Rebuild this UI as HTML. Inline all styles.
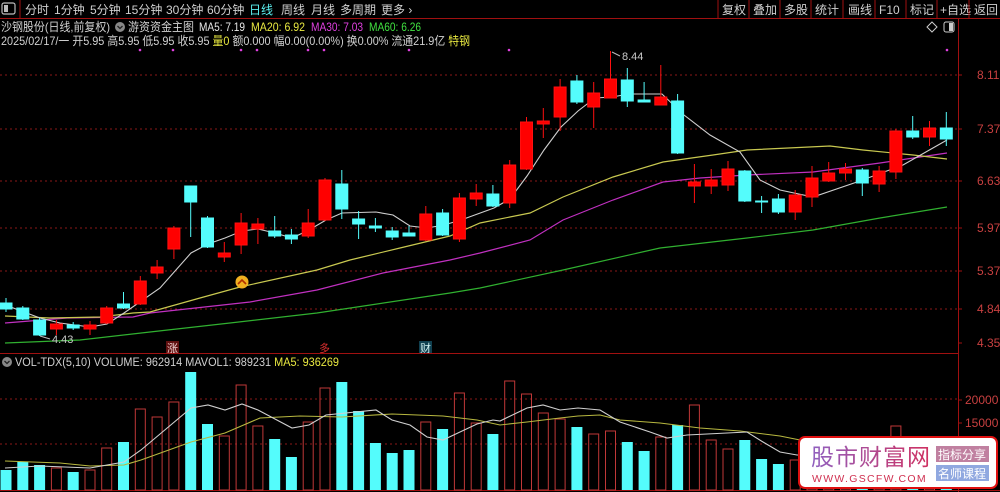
<!DOCTYPE html>
<html><head><meta charset="utf-8"><style>
html,body{margin:0;padding:0;background:#000;width:1000px;height:492px;overflow:hidden}
svg{display:block}
text{font-family:"Liberation Sans","Noto Sans CJK SC",sans-serif}
</style></head><body>
<svg width="1000" height="492" viewBox="0 0 1000 492" xmlns="http://www.w3.org/2000/svg">
<rect width="1000" height="492" fill="#000"/>
<rect x="2" y="3" width="13" height="11" fill="none" stroke="#bbb" stroke-width="1.2" rx="2"/>
<rect x="4" y="5" width="4" height="7" fill="#bbb"/>
<line x1="20" y1="0" x2="20" y2="18" stroke="#a01010"/>
<g font-size="12" fill="#d0d0d0">
<text x="25" y="14">分时</text><text x="54" y="14">1分钟</text><text x="90" y="14">5分钟</text><text x="125" y="14">15分钟</text><text x="166" y="14">30分钟</text><text x="207" y="14">60分钟</text>
<text x="249" y="14" fill="#5cf0f0">日线</text><text x="281" y="14">周线</text><text x="311" y="14">月线</text><text x="340" y="14">多周期</text><text x="381" y="14">更多 ›</text>
<text x="722" y="14">复权</text><text x="753" y="14">叠加</text><text x="784" y="14">多股</text><text x="815" y="14">统计</text><text x="848" y="14">画线</text><text x="879" y="14">F10</text><text x="910" y="14">标记</text><text x="940" y="14">+自选</text><text x="974" y="14">返回</text>
</g>
<g stroke="#a01010"><line x1="718" y1="0" x2="718" y2="18"/><line x1="749" y1="0" x2="749" y2="18"/><line x1="780" y1="0" x2="780" y2="18"/><line x1="811" y1="0" x2="811" y2="18"/><line x1="843" y1="0" x2="843" y2="18"/><line x1="875" y1="0" x2="875" y2="18"/><line x1="906" y1="0" x2="906" y2="18"/><line x1="937" y1="0" x2="937" y2="18"/><line x1="969" y1="0" x2="969" y2="18"/></g>
<line x1="0" y1="18.5" x2="1000" y2="18.5" stroke="#a01010"/>
<g font-size="12">
<text x="1" y="31" fill="#d0d0d0" textLength="109" lengthAdjust="spacingAndGlyphs">沙钢股份(日线,前复权)</text>
<circle cx="120" cy="27" r="5" fill="#888"/><path d="M117.5 26 L120 28.5 L122.5 26" stroke="#222" stroke-width="1.3" fill="none"/>
<text x="128" y="31" fill="#d0d0d0" textLength="66" lengthAdjust="spacingAndGlyphs">游资资金主图</text>
<text x="199" y="31" fill="#e8e8e8" textLength="46" lengthAdjust="spacingAndGlyphs">MA5: 7.19</text>
<text x="251" y="31" fill="#e8e840" textLength="54" lengthAdjust="spacingAndGlyphs">MA20: 6.92</text>
<text x="311" y="31" fill="#e040e0" textLength="52" lengthAdjust="spacingAndGlyphs">MA30: 7.03</text>
<text x="369" y="31" fill="#40e040" textLength="52" lengthAdjust="spacingAndGlyphs">MA60: 6.26</text>
<text x="1" y="45" fill="#d0d0d0" textLength="469" lengthAdjust="spacingAndGlyphs">2025/02/17/一 开5.95 高5.95 低5.95 收5.95 <tspan fill="#e8e840">量0</tspan> 额0.000 幅0.00(0.00%) 换0.00% 流通21.9亿 <tspan fill="#e8e840">特钢</tspan></text>
</g>
<path d="M932 22 L937 27 L932 32 L927 27 Z" fill="none" stroke="#ccc"/>
<rect x="944" y="22" width="10" height="10" rx="2" fill="none" stroke="#ccc"/><rect x="949" y="23" width="4" height="8" fill="#ccc"/>
<line x1="958.5" y1="19" x2="958.5" y2="492" stroke="#a01010"/>
<g stroke="#8a1818" stroke-dasharray="2,3">
<line x1="0" y1="75" x2="958" y2="75"/><line x1="0" y1="129" x2="958" y2="129"/><line x1="0" y1="181" x2="958" y2="181"/><line x1="0" y1="228" x2="958" y2="228"/><line x1="0" y1="271" x2="958" y2="271"/><line x1="0" y1="309" x2="958" y2="309"/>
<line x1="0" y1="399" x2="958" y2="399"/><line x1="0" y1="444" x2="958" y2="444"/>
</g>
<g stroke="#a01010"><line x1="958" y1="75" x2="962" y2="75"/><line x1="958" y1="129" x2="962" y2="129"/><line x1="958" y1="181" x2="962" y2="181"/><line x1="958" y1="228" x2="962" y2="228"/><line x1="958" y1="271" x2="962" y2="271"/><line x1="958" y1="309" x2="962" y2="309"/><line x1="958" y1="343" x2="962" y2="343"/><line x1="958" y1="400" x2="962" y2="400"/><line x1="958" y1="423" x2="962" y2="423"/></g>
<g font-size="12" fill="#c84040">
<text x="977" y="79">8.11</text><text x="977" y="133">7.37</text><text x="977" y="185">6.63</text><text x="977" y="232">5.97</text><text x="977" y="275">5.37</text><text x="977" y="313">4.84</text><text x="977" y="347">4.35</text>
<text x="965" y="404">20000</text><text x="965" y="427">15000</text>
</g>
<g fill="#e040e0"><circle cx="140" cy="50" r="1.3"/><circle cx="173" cy="50" r="1.3"/><circle cx="241" cy="50" r="1.3"/><circle cx="257" cy="50" r="1.3"/><circle cx="308" cy="50" r="1.3"/><circle cx="324" cy="50" r="1.3"/><circle cx="409" cy="50" r="1.3"/><circle cx="509" cy="50" r="1.3"/><circle cx="947" cy="50" r="1.3"/></g>
<!-- MA lines -->
<polyline fill="none" stroke="#30b030" stroke-width="1.2" points="5,343 80,340 150,332 230,323 317,313 450,293 480,288 563,270 660,248 747,238 813,230 880,218 947,207"/>
<polyline fill="none" stroke="#c030c0" stroke-width="1.2" points="5,323 67,318 133,317 150,313 250,302 317,290 383,273 450,260 480,253 530,240 563,220 613,200 663,182 700,178 747,175 813,172 880,163 947,153"/>
<polyline fill="none" stroke="#c8c850" stroke-width="1.2" points="5,316 50,318 100,317 133,313 150,312 200,298 240,287 317,270 350,260 400,248 450,236 480,223 530,213 563,197 613,177 663,162 713,155 747,150 830,146 863,150 913,155 947,159"/>
<polyline fill="none" stroke="#cfcfcf" stroke-width="1.1" points="0,303 40,318 60,323 90,327 107,324 124,313 160,288 191,253 208,244 225,238 242,231 258,229 275,233 292,238 309,230 326,220 342,213 376,212 393,215 410,226 427,228 444,225 461,220 494,208 510,199 527,176 544,150 561,127 578,111 595,98 612,97 629,94 662,94 684,115 710,135 740,152 760,180 780,190 813,197 857,182 903,165 947,140"/>
<g stroke-width="1">
<g stroke="#54fcfc" fill="#54fcfc">
<line x1="6" y1="298" x2="6" y2="312"/><rect x="0" y="303" width="12" height="6"/>
<line x1="22.8" y1="306" x2="22.8" y2="320"/><rect x="16.8" y="308" width="12" height="11"/>
<line x1="39.6" y1="318" x2="39.6" y2="336"/><rect x="33.6" y="320" width="12" height="15"/>
<line x1="73.2" y1="322" x2="73.2" y2="330"/><rect x="67.2" y="325" width="12" height="3"/>
<line x1="123.5" y1="292" x2="123.5" y2="309"/><rect x="117.5" y="304" width="12" height="4"/>
<line x1="190.7" y1="186" x2="190.7" y2="237"/><rect x="184.7" y="186" width="12" height="16"/>
<line x1="207.5" y1="216" x2="207.5" y2="248"/><rect x="201.5" y="218" width="12" height="29"/>
<line x1="274.7" y1="216" x2="274.7" y2="238"/><rect x="268.7" y="231" width="12" height="5"/>
<line x1="291.4" y1="229" x2="291.4" y2="244"/><rect x="285.4" y="235" width="12" height="4"/>
<line x1="341.8" y1="170" x2="341.8" y2="219"/><rect x="335.8" y="184" width="12" height="25"/>
<line x1="358.6" y1="211" x2="358.6" y2="239"/><rect x="352.6" y="219" width="12" height="5"/>
<line x1="375.4" y1="218" x2="375.4" y2="232"/><rect x="369.4" y="226" width="12" height="2"/>
<line x1="392.2" y1="227" x2="392.2" y2="240"/><rect x="386.2" y="231" width="12" height="6"/>
<line x1="409" y1="226" x2="409" y2="236"/><rect x="403" y="233" width="12" height="3"/>
<line x1="442.6" y1="209" x2="442.6" y2="236"/><rect x="436.6" y="213" width="12" height="22"/>
<line x1="492.9" y1="185" x2="492.9" y2="207"/><rect x="486.9" y="194" width="12" height="12"/>
<line x1="576.9" y1="75" x2="576.9" y2="104"/><rect x="570.9" y="81" width="12" height="21"/>
<line x1="627.3" y1="68" x2="627.3" y2="107"/><rect x="621.3" y="80" width="12" height="21"/>
<line x1="644.1" y1="82" x2="644.1" y2="102"/><rect x="638.1" y="100" width="12" height="2"/>
<line x1="677.6" y1="94" x2="677.6" y2="154"/><rect x="671.6" y="101" width="12" height="52"/>
<line x1="744.8" y1="170" x2="744.8" y2="202"/><rect x="738.8" y="171" width="12" height="30"/>
<line x1="761.6" y1="196" x2="761.6" y2="213"/><rect x="755.6" y="201" width="12" height="1"/>
<line x1="778.4" y1="194" x2="778.4" y2="214"/><rect x="772.4" y="199" width="12" height="13"/>
<line x1="862.3" y1="168" x2="862.3" y2="196"/><rect x="856.3" y="170" width="12" height="13"/>
<line x1="912.7" y1="116" x2="912.7" y2="139"/><rect x="906.7" y="131" width="12" height="6"/>
<line x1="946.3" y1="112" x2="946.3" y2="146"/><rect x="940.3" y="128" width="12" height="11"/>
</g>
<g stroke="#ff1010" fill="#ff0000">
<line x1="56.4" y1="320" x2="56.4" y2="335"/><rect x="50.4" y="324" width="12" height="5"/>
<line x1="90" y1="321" x2="90" y2="335"/><rect x="84" y="325" width="12" height="4"/>
<line x1="106.7" y1="306" x2="106.7" y2="324"/><rect x="100.7" y="308" width="12" height="15"/>
<line x1="140.3" y1="276" x2="140.3" y2="305"/><rect x="134.3" y="281" width="12" height="23"/>
<line x1="157.1" y1="260" x2="157.1" y2="279"/><rect x="151.1" y="267" width="12" height="6"/>
<line x1="173.9" y1="226" x2="173.9" y2="259"/><rect x="167.9" y="228" width="12" height="21"/>
<line x1="224.3" y1="242" x2="224.3" y2="262"/><rect x="218.3" y="253" width="12" height="4"/>
<line x1="241.1" y1="213" x2="241.1" y2="254"/><rect x="235.1" y="223" width="12" height="22"/>
<line x1="257.9" y1="218" x2="257.9" y2="244"/><rect x="251.9" y="224" width="12" height="5"/>
<line x1="308.2" y1="209" x2="308.2" y2="238"/><rect x="302.2" y="223" width="12" height="13"/>
<line x1="325" y1="178" x2="325" y2="221"/><rect x="319" y="180" width="12" height="40"/>
<line x1="425.8" y1="206" x2="425.8" y2="241"/><rect x="419.8" y="214" width="12" height="26"/>
<line x1="459.4" y1="193" x2="459.4" y2="242"/><rect x="453.4" y="198" width="12" height="41"/>
<line x1="476.2" y1="184" x2="476.2" y2="206"/><rect x="470.2" y="193" width="12" height="6"/>
<line x1="509.7" y1="160" x2="509.7" y2="208"/><rect x="503.7" y="165" width="12" height="38"/>
<line x1="526.5" y1="117" x2="526.5" y2="170"/><rect x="520.5" y="122" width="12" height="47"/>
<line x1="543.3" y1="108" x2="543.3" y2="138"/><rect x="537.3" y="121" width="12" height="3"/>
<line x1="560.1" y1="79" x2="560.1" y2="131"/><rect x="554.1" y="87" width="12" height="30"/>
<line x1="593.7" y1="82" x2="593.7" y2="128"/><rect x="587.7" y="93" width="12" height="14"/>
<line x1="610.5" y1="51" x2="610.5" y2="98"/><rect x="604.5" y="79" width="12" height="19"/>
<line x1="660.8" y1="65" x2="660.8" y2="105"/><rect x="654.8" y="97" width="12" height="8"/>
<line x1="694.4" y1="164" x2="694.4" y2="203"/><rect x="688.4" y="182" width="12" height="4"/>
<line x1="711.2" y1="169" x2="711.2" y2="194"/><rect x="705.2" y="180" width="12" height="6"/>
<line x1="728" y1="161" x2="728" y2="191"/><rect x="722" y="169" width="12" height="16"/>
<line x1="795.2" y1="190" x2="795.2" y2="220"/><rect x="789.2" y="195" width="12" height="17"/>
<line x1="812" y1="166" x2="812" y2="207"/><rect x="806" y="178" width="12" height="19"/>
<line x1="828.7" y1="162" x2="828.7" y2="182"/><rect x="822.7" y="173" width="12" height="8"/>
<line x1="845.5" y1="163" x2="845.5" y2="180"/><rect x="839.5" y="169" width="12" height="4"/>
<line x1="879.1" y1="166" x2="879.1" y2="192"/><rect x="873.1" y="171" width="12" height="13"/>
<line x1="895.9" y1="129" x2="895.9" y2="179"/><rect x="889.9" y="131" width="12" height="41"/>
<line x1="929.5" y1="121" x2="929.5" y2="146"/><rect x="923.5" y="128" width="12" height="9"/>
</g>
</g>
<path d="M612 52 L620 56" stroke="#bbb" fill="none"/><text x="622" y="60" font-size="11" fill="#c8c8c8">8.44</text>
<path d="M40 336 L50 339" stroke="#bbb" fill="none"/><text x="52" y="343" font-size="11" fill="#c8c8c8">4.43</text>
<circle cx="242" cy="282" r="6.5" fill="#f0b020"/><path d="M238 284 L242 280 L246 284" stroke="#b03000" stroke-width="1.6" fill="none"/>
<rect x="166" y="341" width="13" height="12" fill="#601010"/><text x="167" y="352" font-size="11" fill="#f0d0d0">涨</text>
<text x="319" y="352" font-size="11" fill="#e03030">多</text>
<rect x="419" y="341" width="13" height="12" fill="#104050"/><text x="420" y="352" font-size="11" fill="#d0f0f0">财</text>
<line x1="0" y1="353.5" x2="958" y2="353.5" stroke="#a01010"/>
<line x1="0" y1="490.5" x2="1000" y2="490.5" stroke="#a01010"/>
<circle cx="7" cy="362" r="5" fill="#888"/><path d="M4.5 361 L7 363.5 L9.5 361" stroke="#222" stroke-width="1.3" fill="none"/>
<text x="15" y="366" font-size="11.5" fill="#d0d0d0" textLength="324" lengthAdjust="spacingAndGlyphs">VOL-TDX(5,10) VOLUME: 962914  MAVOL1: 989231 <tspan fill="#e8e840">MA5: 936269</tspan></text>
<g fill="#54fcfc">
<rect x="0.5" y="470" width="11" height="20"/><rect x="17.3" y="462" width="11" height="28"/><rect x="34.1" y="465" width="11" height="25"/><rect x="67.7" y="472" width="11" height="18"/><rect x="118" y="442" width="11" height="48"/><rect x="185.2" y="372" width="11" height="118"/><rect x="202" y="424" width="11" height="66"/><rect x="269.2" y="439" width="11" height="51"/><rect x="285.9" y="457" width="11" height="33"/><rect x="336.3" y="382" width="11" height="108"/><rect x="353.1" y="411" width="11" height="79"/><rect x="369.9" y="443" width="11" height="47"/><rect x="386.7" y="453" width="11" height="37"/><rect x="403.5" y="450" width="11" height="40"/><rect x="437.1" y="429" width="11" height="61"/><rect x="487.4" y="434" width="11" height="56"/><rect x="571.4" y="427" width="11" height="63"/><rect x="621.8" y="442" width="11" height="48"/><rect x="638.6" y="451" width="11" height="39"/><rect x="672.1" y="425" width="11" height="65"/><rect x="739.3" y="440" width="11" height="50"/><rect x="756.1" y="459" width="11" height="31"/><rect x="772.9" y="464" width="11" height="26"/><rect x="856.8" y="460" width="11" height="30"/><rect x="907.2" y="450" width="11" height="40"/><rect x="940.8" y="445" width="11" height="45"/>
</g>
<g fill="none" stroke="#c03838">
<rect x="51.4" y="468" width="10" height="22"/><rect x="85" y="470" width="10" height="20"/><rect x="101.7" y="448" width="10" height="42"/><rect x="135.3" y="409" width="10" height="81"/><rect x="152.1" y="417" width="10" height="73"/><rect x="168.9" y="402" width="10" height="88"/><rect x="219.3" y="436" width="10" height="54"/><rect x="236.1" y="385" width="10" height="105"/><rect x="252.9" y="426" width="10" height="64"/><rect x="303.2" y="422" width="10" height="68"/><rect x="320" y="388" width="10" height="102"/><rect x="420.8" y="422" width="10" height="68"/><rect x="454.4" y="393" width="10" height="97"/><rect x="471.2" y="423" width="10" height="67"/><rect x="504.7" y="381" width="10" height="109"/><rect x="521.5" y="394" width="10" height="96"/><rect x="538.3" y="413" width="10" height="77"/><rect x="555.1" y="419" width="10" height="71"/><rect x="588.7" y="434" width="10" height="56"/><rect x="605.5" y="431" width="10" height="59"/><rect x="655.8" y="437" width="10" height="53"/><rect x="689.4" y="405" width="10" height="85"/><rect x="706.2" y="440" width="10" height="50"/><rect x="723" y="449" width="10" height="41"/><rect x="790.2" y="460" width="10" height="30"/><rect x="807" y="455" width="10" height="35"/><rect x="823.7" y="465" width="10" height="25"/><rect x="840.5" y="468" width="10" height="22"/><rect x="874.1" y="462" width="10" height="28"/><rect x="890.9" y="426" width="10" height="64"/><rect x="924.5" y="455" width="10" height="35"/>
</g>
<polyline fill="none" stroke="#b8b840" stroke-width="1.1" points="5,461 60,463 90,466 124,465 141,460 191,442 225,433 260,418 300,416 342,417 392,414 443,416 477,420 500,425 527,422 560,418 578,416 600,415 620,420 660,423 700,428 740,431 780,436 800,440 860,445 947,448"/>
<polyline fill="none" stroke="#d0d0d0" stroke-width="1.1" points="5,468 40,466 90,468 124,462 141,450 191,408 208,405 225,410 242,404 258,410 292,428 309,425 326,415 376,410 392,420 410,425 427,437 443,440 460,432 477,424 493,420 500,421 527,408 543,405 560,410 578,408 600,410 620,422 650,432 667,438 687,435 747,432 763,442 780,452 797,455 860,455 947,446"/>
<defs><linearGradient id="g" x1="0" x2="1"><stop offset="0" stop-color="#9060c0"/><stop offset="1" stop-color="#d03060"/></linearGradient></defs>
<rect x="799" y="437" width="198" height="51" rx="6" fill="#fff" stroke="#e01010" stroke-width="2"/>
<text x="811" y="465" font-size="23" fill="url(#g)" font-family="'Noto Serif CJK SC','Noto Sans CJK SC',serif" letter-spacing="1">股市财富网</text>
<text x="812" y="482" font-size="10.5" fill="#d03050" font-family="'Liberation Serif',serif" letter-spacing="1.3">WWW.GSCFW.COM</text>
<rect x="936" y="446" width="53" height="16" fill="#c080a0"/><text x="938" y="459" font-size="12" fill="#fff">指标分享</text>
<rect x="936" y="465" width="53" height="16" fill="#90a8e0"/><text x="938" y="478" font-size="12" fill="#fff">名师课程</text>
</svg>
</body></html>
